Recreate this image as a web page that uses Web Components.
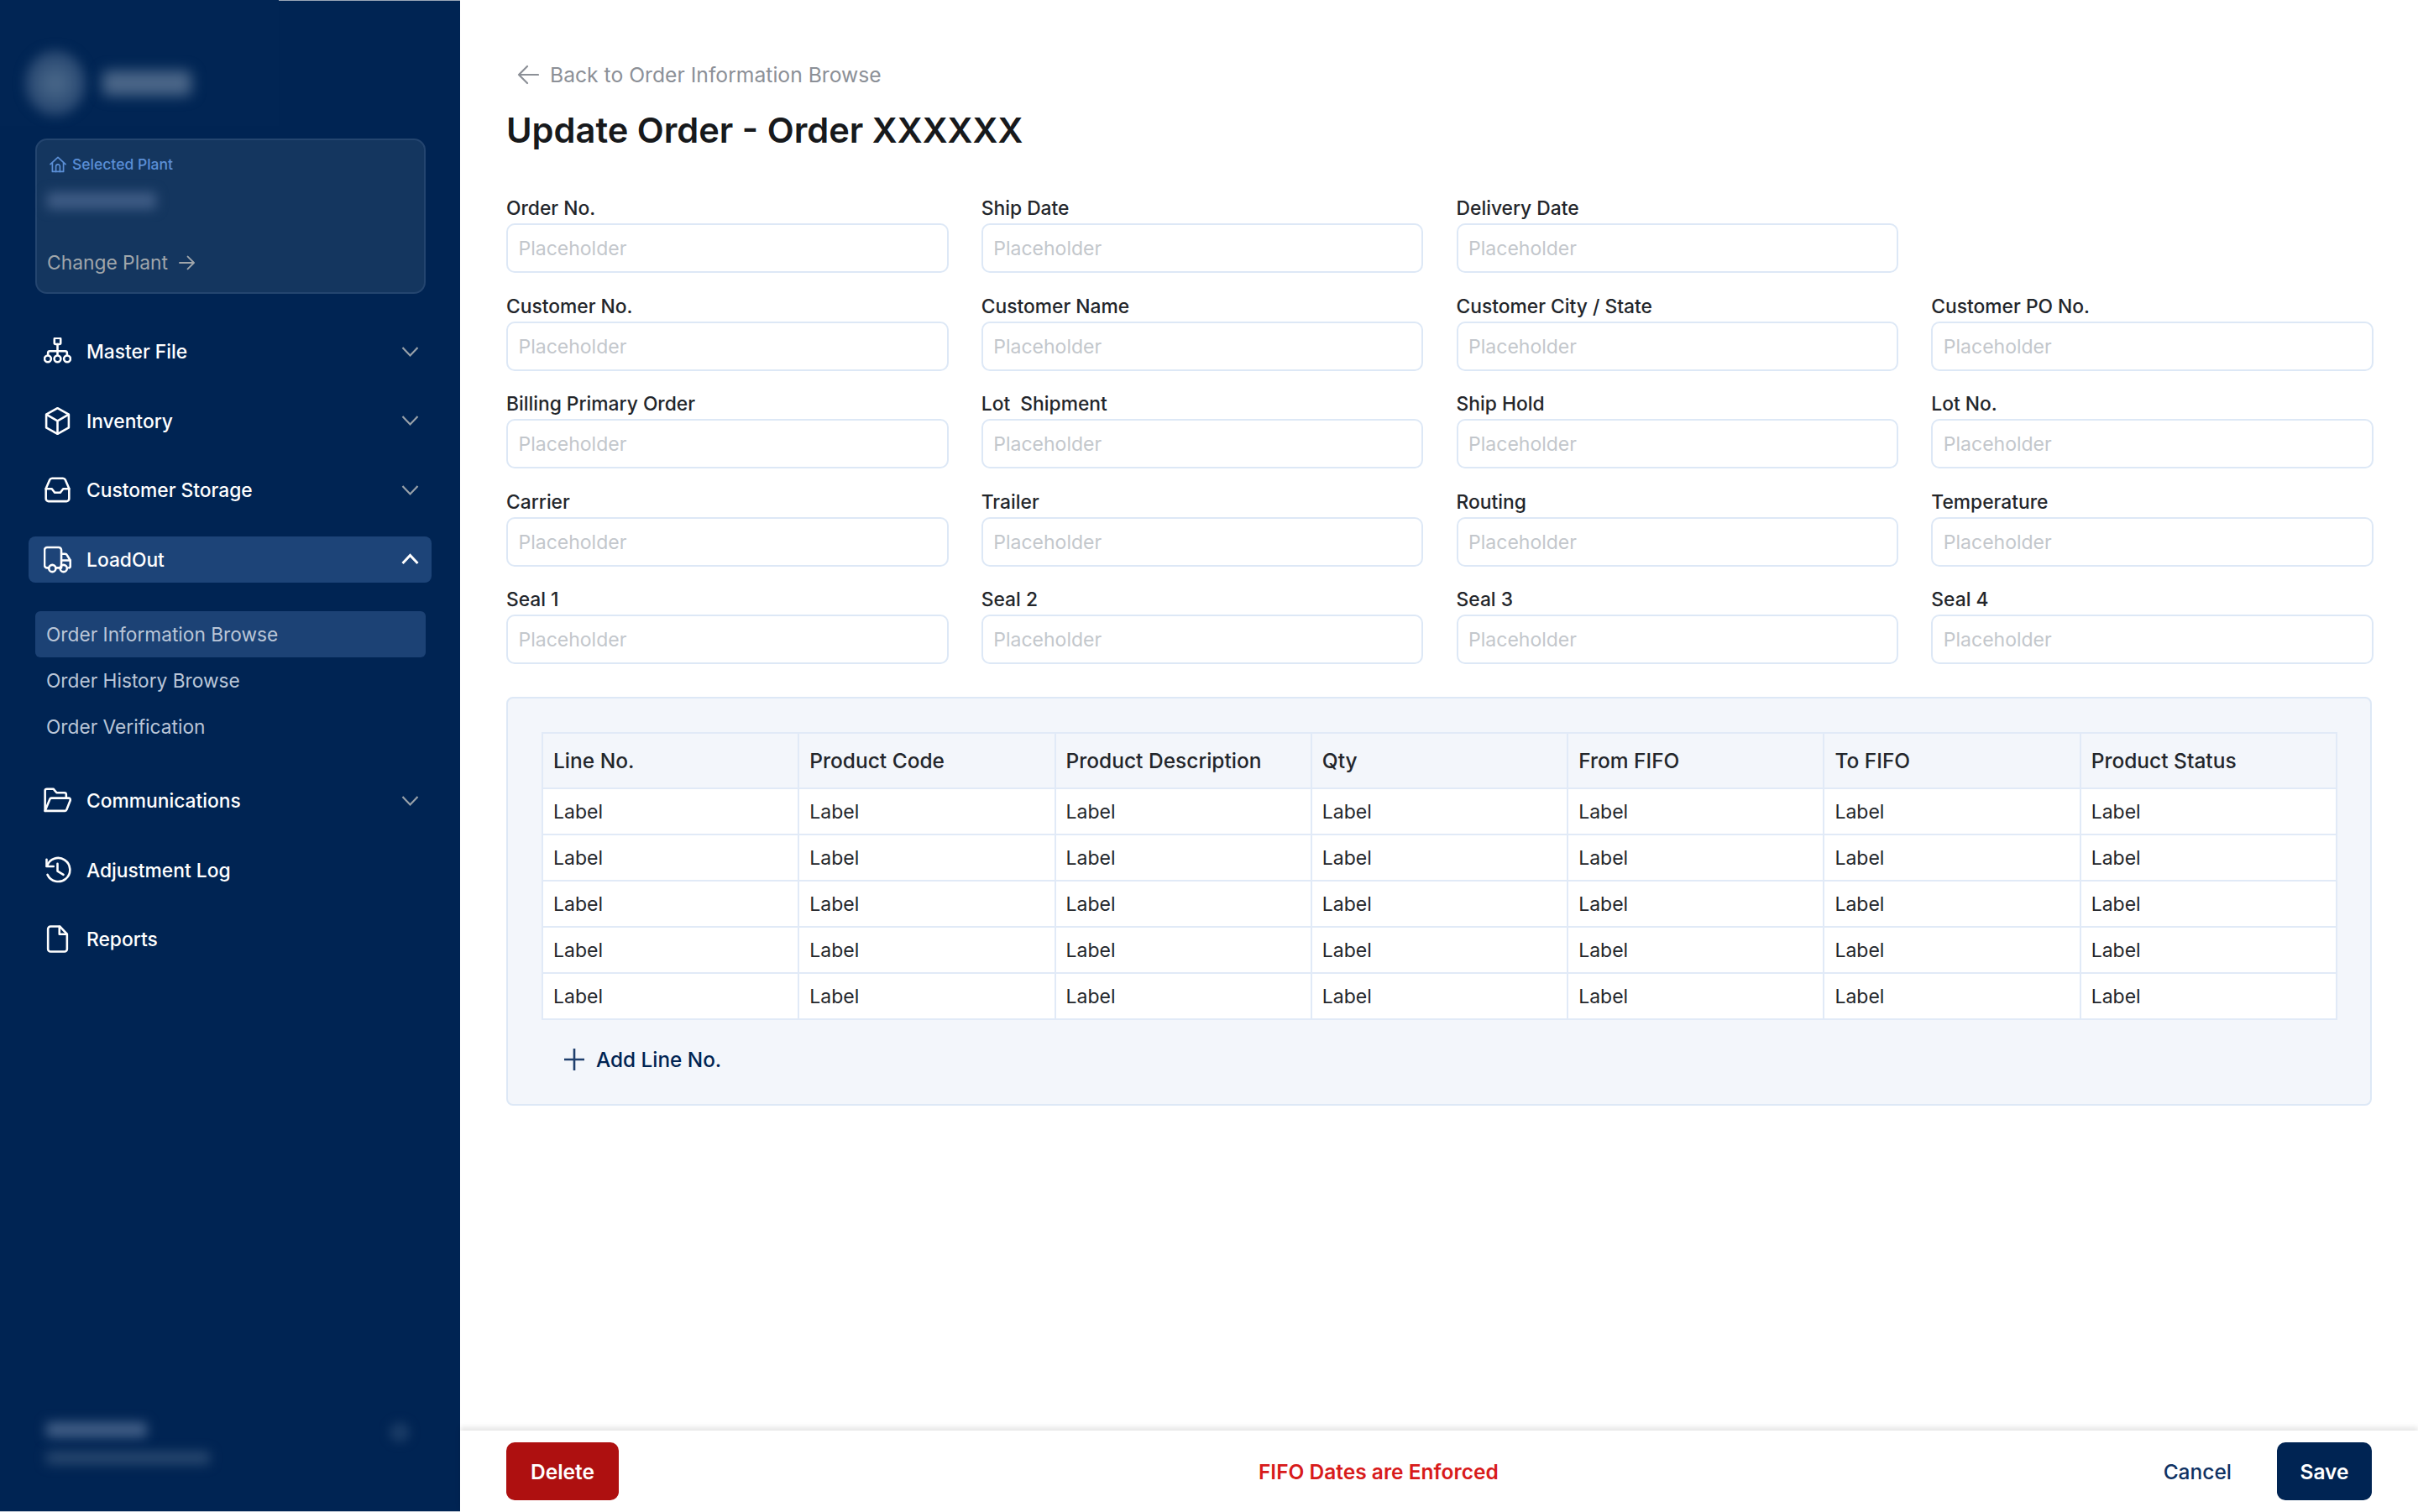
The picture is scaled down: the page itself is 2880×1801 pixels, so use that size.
<!DOCTYPE html>
<html lang="en">
<head>
<meta charset="utf-8">
<title>Update Order</title>
<style>
  html, body { margin: 0; padding: 0; background: #fff; }
  body { width: 2880px; height: 1801px; overflow: hidden; font-family: "Inter", "Liberation Sans", sans-serif; }
</style>
</head>
<body>
<app-shell>
  <side-bar slot="side">
    <plant-card slot="card"></plant-card>
    <nav-item icon="tree" label="Master File" chevron="down"></nav-item>
    <nav-item icon="box" label="Inventory" chevron="down"></nav-item>
    <nav-item icon="tray" label="Customer Storage" chevron="down"></nav-item>
    <nav-item icon="truck" label="LoadOut" chevron="up" active></nav-item>
    <sub-menu>
      <sub-item active>Order Information Browse</sub-item>
      <sub-item>Order History Browse</sub-item>
      <sub-item>Order Verification</sub-item>
    </sub-menu>
    <nav-item icon="folder" label="Communications" chevron="down"></nav-item>
    <nav-item icon="history" label="Adjustment Log"></nav-item>
    <nav-item icon="file" label="Reports"></nav-item>
  </side-bar>

  <page-head slot="main" back="Back to Order Information Browse" title-text="Update Order - Order XXXXXX"></page-head>
  <order-form slot="main">
    <form-field label="Order No."></form-field>
    <form-field label="Ship Date"></form-field>
    <form-field label="Delivery Date"></form-field>
    <div></div>
    <form-field label="Customer No."></form-field>
    <form-field label="Customer Name"></form-field>
    <form-field label="Customer City / State"></form-field>
    <form-field label="Customer PO No."></form-field>
    <form-field label="Billing Primary Order"></form-field>
    <form-field label="Lot&nbsp; Shipment"></form-field>
    <form-field label="Ship Hold"></form-field>
    <form-field label="Lot No."></form-field>
    <form-field label="Carrier"></form-field>
    <form-field label="Trailer"></form-field>
    <form-field label="Routing"></form-field>
    <form-field label="Temperature"></form-field>
    <form-field label="Seal 1"></form-field>
    <form-field label="Seal 2"></form-field>
    <form-field label="Seal 3"></form-field>
    <form-field label="Seal 4"></form-field>
  </order-form>
  <line-panel slot="main"></line-panel>

  <action-bar slot="foot"></action-bar>
</app-shell>

<script>
const ICONS = {
  tree: '<rect x="12.4" y="0.6" width="7.2" height="7.2" rx="1.4"/><path d="M16 7.8v8M5 20v-2.2a2 2 0 0 1 2-2h18a2 2 0 0 1 2 2V20M16 15.8V20"/><circle cx="4.8" cy="24.6" r="3.8"/><circle cx="16" cy="24.6" r="3.8"/><circle cx="27.2" cy="24.6" r="3.8"/>',
  box: '<path d="M16 1.2 29 8.4v15.2L16 30.8 3 23.6V8.4Z"/><path d="M3.4 8.6 16 15.8l12.6-7.2M16 15.8v14.6"/>',
  tray: '<path d="M2.6 14.5 7 4.4A3 3 0 0 1 9.8 2.6h12.4A3 3 0 0 1 25 4.4l4.4 10.1v11.7a3 3 0 0 1-3 3H5.6a3 3 0 0 1-3-3Z"/><path d="M2.6 14.8h6.8l3.4 4.4h6.4l3.4-4.4h6.8"/>',
  truck: '<path d="M6 25.6H4a3 3 0 0 1-3-3V5a3 3 0 0 1 3-3h13.4a3 3 0 0 1 3 3v20.6M20.4 9.4h4.6a2 2 0 0 1 1.8 1.1l4 6.5v7a1.8 1.8 0 0 1-1.6 1.6M20.4 17h10.8M14 25.6h4.8"/><circle cx="10" cy="26.2" r="4"/><circle cx="23" cy="26.2" r="4"/>',
  folder: '<path d="M1.6 28V4.6a2 2 0 0 1 2-2h7.6l3.8 4.4H24a2 2 0 0 1 2 2V13"/><path d="M1.6 28h23a2 2 0 0 0 1.9-1.4l4.2-10.6a2 2 0 0 0-1.9-2.8H9a2 2 0 0 0-1.9 1.4Z"/>',
  history: '<path d="M3.4 3.6v8h8"/><path d="M3.8 11.4A13.6 13.6 0 1 1 4.4 21.2"/><path d="M16 8.6v8.4l6.8 4.2"/>',
  file: '<path d="M8 1.4h10.6L27 10.4v17.2a3 3 0 0 1-3 3H8a3 3 0 0 1-3-3V4.4a3 3 0 0 1 3-3Z"/><path d="M18.2 1.8v8.6h8.4"/>'
};

class AppShell extends HTMLElement {
  connectedCallback() {
    this.attachShadow({ mode: 'open' }).innerHTML = `
    <style>
      :host { display: grid; grid-template-columns: 548px 1fr; width: 2880px; height: 1801px; }
      .main { display: flex; flex-direction: column; min-width: 0; }
      .content { flex: 1; padding: 74px 55px 0; }
    </style>
    <slot name="side"></slot>
    <div class="main">
      <div class="content"><slot name="main"></slot></div>
      <slot name="foot"></slot>
    </div>`;
  }
}
customElements.define('app-shell', AppShell);

class SideBar extends HTMLElement {
  connectedCallback() {
    this.attachShadow({ mode: 'open' }).innerHTML = `
    <style>
      :host { display: flex; flex-direction: column; height: 1800px; background: #002453; border-bottom: 1px solid #c3cad5; position: relative; }
      /* thin light line that runs along the top, right of the logo */
      :host::before { content: ""; position: absolute; top: 0; left: 332px; right: 0; height: 1px; background: #9aa6b8; }
      .logo { height: 150px; width: 332px; display: flex; align-items: center; gap: 20px; padding: 48px 0 0 30px; box-sizing: border-box; background: #012554; }
      .mark { width: 72px; height: 78px; border-radius: 50%; background: radial-gradient(circle, #486688 10%, #2a4a73 60%); filter: blur(7px); }
      .word { width: 106px; height: 30px; background: #4a6688; border-radius: 6px; filter: blur(8px); }
      .card { padding: 15px 41px 0 42px; }
      nav { display: flex; flex-direction: column; gap: 27.5px; padding: 41px 34px 0; }
      .user { margin-top: auto; height: 106px; box-sizing: border-box; padding: 0 55px; position: relative; }
      .name, .mail { display: block; filter: blur(7px); border-radius: 4px; }
      .name { width: 120px; height: 18px; background: #425f87; }
      .mail { width: 195px; height: 15px; margin-top: 17px; background: #28486f; }
      .dot { position: absolute; left: 464px; top: 0; width: 24px; height: 24px; border-radius: 50%; background: #183a65; filter: blur(6px); }
    </style>
    <div class="logo"><span class="mark"></span><span class="word"></span></div>
    <div class="card"><slot name="card"></slot></div>
    <nav><slot></slot></nav>
    <div class="user"><span class="name"></span><span class="mail"></span><span class="dot"></span></div>`;
  }
}
customElements.define('side-bar', SideBar);

class PlantCard extends HTMLElement {
  connectedCallback() {
    this.attachShadow({ mode: 'open' }).innerHTML = `
    <style>
      :host { display: flex; flex-direction: column; height: 185px; box-sizing: border-box; padding: 18px 12px 20px; background: #14365f; border: 2px solid #24456f; border-radius: 14px; }
      .sel { display: flex; align-items: center; gap: 7px; padding-left: 3px; color: #5b8fd6; font-size: 17.5px; font-weight: 500; line-height: 22px; }
      .plant { width: 130px; height: 20px; margin-top: 22px; background: #3f5c85; border-radius: 4px; filter: blur(7px); }
      .change { margin-top: auto; display: flex; align-items: center; gap: 13px; color: #a0a6ab; font-size: 22.8px; line-height: 30px; }
      svg { display: block; fill: none; stroke: currentColor; }
    </style>
    <div class="sel">
      <svg width="20" height="20" viewBox="0 0 20 20" stroke-width="1.7" stroke-linejoin="round" stroke-linecap="round"><path d="M1 9.6 10 1.4l9 8.2M3.4 8v10.4h13.2V8"/><path d="M7.6 18.4v-6.2a2.4 2.4 0 0 1 4.8 0v6.2"/></svg>
      <span>Selected Plant</span>
    </div>
    <div class="plant"></div>
    <div class="change">
      <span>Change Plant</span>
      <svg width="19" height="18" viewBox="0 0 19 18" stroke-width="1.9" stroke-linecap="round" stroke-linejoin="round"><path d="M1 9h16.6M10.6 1.6 18 9l-7.4 7.4"/></svg>
    </div>`;
  }
}
customElements.define('plant-card', PlantCard);

class NavItem extends HTMLElement {
  connectedCallback() {
    const chev = this.getAttribute('chevron');
    const path = chev === 'up' ? 'M1.5 12 10.5 2.5 19.5 12' : 'M1.5 2 10.5 11.5 19.5 2';
    this.attachShadow({ mode: 'open' }).innerHTML = `
    <style>
      :host { display: flex; align-items: center; height: 55px; padding: 0 15px 0 18px; border-radius: 8px; color: #fff; font-size: 22.8px; font-weight: 500; }
      :host([active]) { background: #1d4478; }
      .icon { width: 33px; height: 33px; margin-right: 18px; fill: none; stroke: currentColor; stroke-width: 2.5; stroke-linecap: round; stroke-linejoin: round; flex: none; }
      .label { flex: 1; }
      .chev { width: 21px; height: 14px; fill: none; stroke: #98a1a9; stroke-width: 2.2; }
      :host([active]) .chev { stroke: #fff; stroke-width: 3; }
    </style>
    <svg class="icon" viewBox="0 0 32 32">${ICONS[this.getAttribute('icon')]}</svg>
    <span class="label">${this.getAttribute('label')}</span>
    ${chev ? `<svg class="chev" viewBox="0 0 21 14"><path d="${path}"/></svg>` : ''}`;
  }
}
customElements.define('nav-item', NavItem);

class SubMenu extends HTMLElement {
  connectedCallback() {
    this.attachShadow({ mode: 'open' }).innerHTML = `
    <style>:host { display: flex; flex-direction: column; padding: 6.5px 7px 6px 8px; }</style>
    <slot></slot>`;
  }
}
customElements.define('sub-menu', SubMenu);

class SubItem extends HTMLElement {
  connectedCallback() {
    this.attachShadow({ mode: 'open' }).innerHTML = `
    <style>
      :host { display: flex; align-items: center; height: 55px; padding-left: 13px; border-radius: 6px; color: #bac6d8; font-size: 22.7px; }
      :host([active]) { background: #1c4275; }
    </style>
    <slot></slot>`;
  }
}
customElements.define('sub-item', SubItem);

class PageHead extends HTMLElement {
  connectedCallback() {
    this.attachShadow({ mode: 'open' }).innerHTML = `
    <style>
      :host { display: block; }
      .back { display: flex; align-items: center; gap: 13px; padding-left: 13px; height: 30px; color: #8c9097; font-size: 24.7px; }
      svg { fill: none; stroke: #8c9097; stroke-width: 2.2; stroke-linecap: round; stroke-linejoin: round; }
      h1 { margin: 23px 0 0; font-size: 41.6px; line-height: 56px; font-weight: 600; color: #17191c; }
    </style>
    <div class="back">
      <svg width="26" height="24" viewBox="0 0 26 24"><path d="M25 12H2M12 2 2 12l10 10"/></svg>
      <span>${this.getAttribute('back')}</span>
    </div>
    <h1>${this.getAttribute('title-text')}</h1>`;
  }
}
customElements.define('page-head', PageHead);

class OrderForm extends HTMLElement {
  connectedCallback() {
    this.attachShadow({ mode: 'open' }).innerHTML = `
    <style>:host { display: grid; grid-template-columns: repeat(4, 526.6px); column-gap: 39.2px; row-gap: 24.6px; margin-top: 50px; }</style>
    <slot></slot>`;
  }
}
customElements.define('order-form', OrderForm);

class FormField extends HTMLElement {
  connectedCallback() {
    this.attachShadow({ mode: 'open' }).innerHTML = `
    <style>
      :host { display: block; }
      label { display: block; height: 30px; line-height: 30px; margin-bottom: 3px; font-size: 22.8px; font-weight: 500; color: #23262b; }
      .box { height: 59px; box-sizing: border-box; display: flex; align-items: center; padding: 1px 12.5px 0; background: #fff; border: 2px solid #dde8f6; border-radius: 10px; color: #c3c7cc; font-size: 23px; }
    </style>
    <label>${this.getAttribute('label')}</label>
    <div class="box">Placeholder</div>`;
  }
}
customElements.define('form-field', FormField);

class LinePanel extends HTMLElement {
  connectedCallback() {
    const heads = ['Line No.', 'Product Code', 'Product Description', 'Qty', 'From FIFO', 'To FIFO', 'Product Status'];
    const row = '<tr>' + heads.map(() => '<td>Label</td>').join('') + '</tr>';
    this.attachShadow({ mode: 'open' }).innerHTML = `
    <style>
      :host { display: block; margin-top: 39px; height: 487px; box-sizing: border-box; padding: 40px 40px 0; background: #f3f6fb; border: 2px solid #dde8f6; border-radius: 8px; color: #23262b; }
      table { width: 2139px; table-layout: fixed; border-collapse: collapse; }
      th, td { border: 2px solid #e1eaf7; padding: 0 12px; text-align: left; }
      th { height: 64px; font-size: 24.5px; font-weight: 500; background: #f3f6fb; }
      td { height: 53px; font-size: 23px; background: #fff; }
      .add { display: flex; align-items: center; gap: 14px; margin: 32px 0 0 27px; height: 30px; color: #002453; font-size: 24.3px; font-weight: 500; }
      svg { stroke: #1f3f6d; stroke-width: 2.6; fill: none; }
    </style>
    <table>
      <thead><tr>${heads.map(h => `<th>${h}</th>`).join('')}</tr></thead>
      <tbody>${row.repeat(5)}</tbody>
    </table>
    <div class="add">
      <svg width="24" height="26" viewBox="0 0 24 26"><path d="M12 0v26M0 13h24"/></svg>
      <span>Add Line No.</span>
    </div>`;
  }
}
customElements.define('line-panel', LinePanel);

class ActionBar extends HTMLElement {
  connectedCallback() {
    this.attachShadow({ mode: 'open' }).innerHTML = `
    <style>
      :host { display: flex; justify-content: space-between; align-items: center; height: 97px; box-sizing: border-box; padding: 14px 55px; background: #fff; box-shadow: 0 -4px 6px rgba(0,0,0,.1); position: relative; }
      button { font: inherit; font-size: 24.5px; font-weight: 600; height: 69px; border: 0; border-radius: 10px; color: #fff; }
      .del { width: 134px; background: #ae1010; }
      .msg { color: #d81b1b; font-size: 24.5px; font-weight: 600; }
      .right { display: flex; align-items: center; gap: 54px; }
      .cancel { padding-left: 30px; color: #0f3263; font-size: 24.5px; font-weight: 500; }
      .save { width: 113px; background: #002453; }
    </style>
    <button class="del">Delete</button>
    <div class="msg">FIFO Dates are Enforced</div>
    <div class="right"><span class="cancel">Cancel</span><button class="save">Save</button></div>`;
  }
}
customElements.define('action-bar', ActionBar);
</script>
</body>
</html>
